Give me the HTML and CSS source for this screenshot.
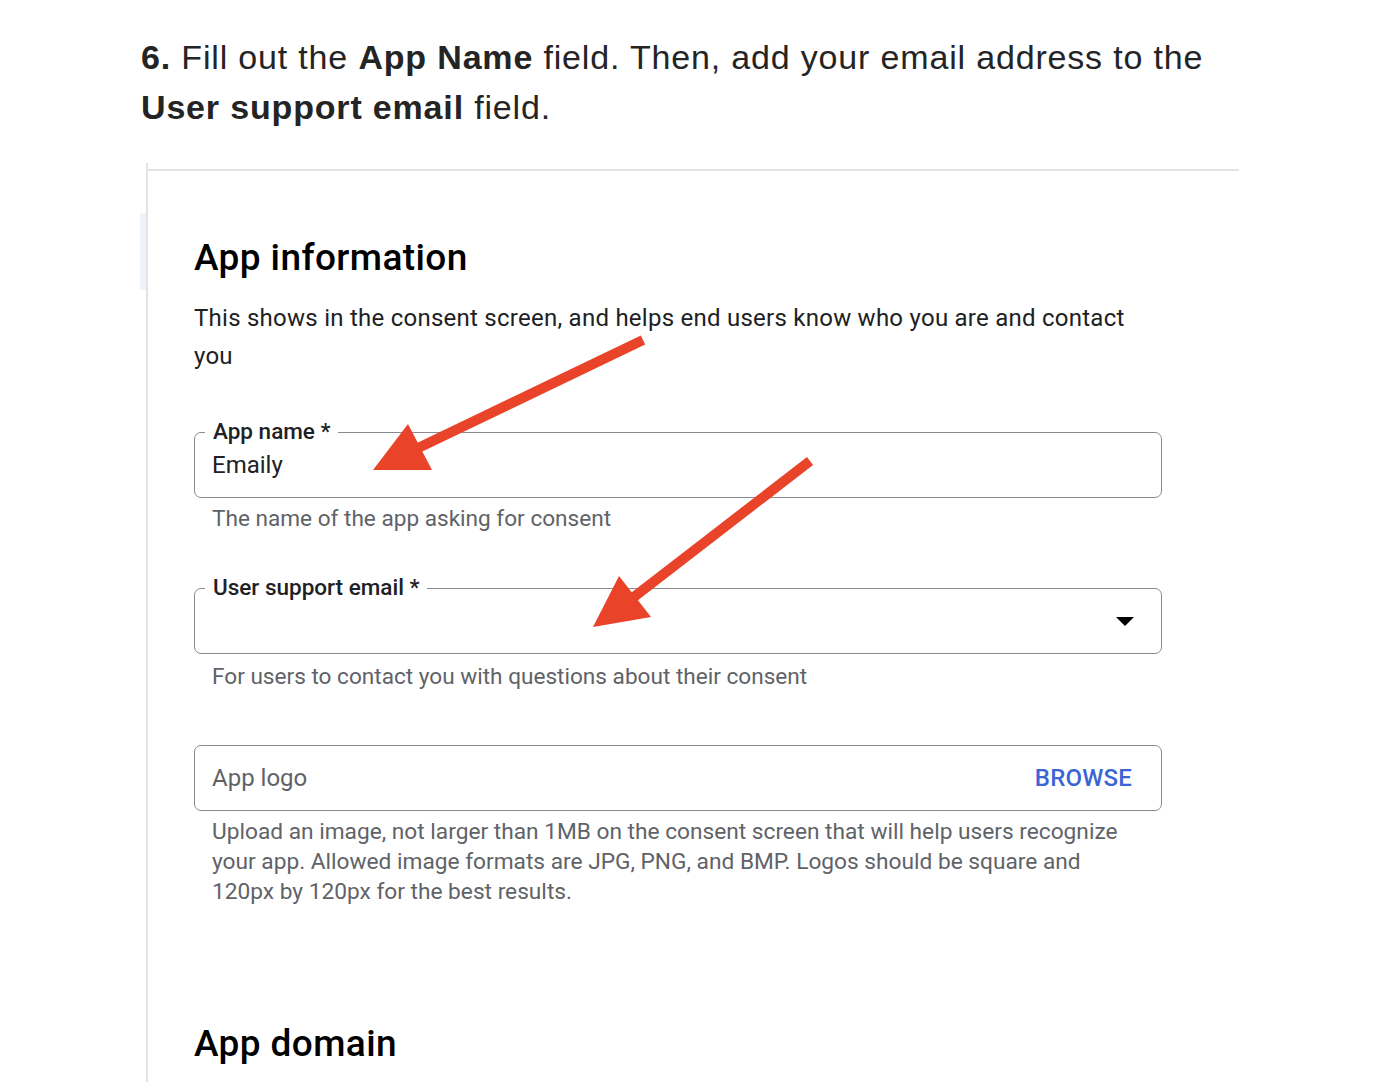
FILE: index.html
```html
<!DOCTYPE html>
<html lang="en">
<head>
<meta charset="utf-8">
<title>App information</title>
<link rel="stylesheet" href="styles.css">
</head>
<body>
<div class="page">
  <p class="step"><strong>6.</strong> Fill out the <strong>App Name</strong> field. Then, add your email address to the <strong>User support email</strong> field.</p>

  <div class="shot">
    <div class="nav-strip"></div>
    <div class="card">
      <div class="card-inner">
        <h2 class="section-title">App information</h2>
        <p class="section-desc">This shows in the consent screen, and helps end users know who you are and contact you</p>

        <div class="field field-first">
          <span class="field-label">App name *</span>
          <span class="field-value">Emaily</span>
        </div>
        <p class="hint">The name of the app asking for consent</p>

        <div class="field field-spaced">
          <span class="field-label">User support email *</span>
          <span class="field-value"></span>
          <span class="caret"></span>
        </div>
        <p class="hint hint-low">For users to contact you with questions about their consent</p>

        <div class="field field-logo">
          <span class="field-placeholder">App logo</span>
          <span class="browse">BROWSE</span>
        </div>
        <p class="hint hint-wide">Upload an image, not larger than 1MB on the consent screen that will help users recognize<br>your app. Allowed image formats are JPG, PNG, and BMP. Logos should be square and<br>120px by 120px for the best results.</p>

        <h2 class="section-title domain-title">App domain</h2>
      </div>
    </div>
  </div>

  <svg class="arrows" width="1396" height="1082" viewBox="0 0 1396 1082" aria-hidden="true">
    <line x1="643" y1="340" x2="414" y2="450" stroke="#e9432a" stroke-width="10"/>
    <polygon points="373,470 408,424 432,470" fill="#e9432a"/>
    <line x1="810" y1="461" x2="630" y2="600" stroke="#e9432a" stroke-width="10"/>
    <polygon points="593,627 619,576 651,617" fill="#e9432a"/>
  </svg>
</div>
</body>
</html>
```

FILE: styles.css
```css
html, body {
  margin: 0;
  padding: 0;
  background: #ffffff;
}

.page {
  position: relative;
  width: 1396px;
  height: 1082px;
  overflow: hidden;
}

.step {
  margin: 32px 0 0 141px;
  width: 1095px;
  font-family: "Liberation Sans", Arial, sans-serif;
  font-size: 34px;
  line-height: 50px;
  color: #242424;
  letter-spacing: 0.83px;
}

.step strong {
  font-weight: 700;
}

.shot {
  display: flex;
  margin: 31px 0 0 140px;
}

.nav-strip {
  width: 6px;
  height: 77px;
  margin-top: 50px;
  background: #eef2fb;
  flex: none;
}

.card {
  flex: none;
  width: 1091px;
  min-height: 930px;
  border-left: 2px solid #e3e3e3;
  padding-top: 6px;
}

.card-inner {
  border-top: 2px solid #e3e3e3;
  padding: 0 0 0 46px;
  font-family: Roboto, "Noto Sans", sans-serif;
  color: #202124;
}

.section-title {
  margin: 65px 0 0 0;
  font-size: 37px;
  line-height: 44px;
  font-weight: 500;
  letter-spacing: 0.4px;
  color: #000000;
}

.section-desc {
  margin: 19px 0 0 0;
  width: 960px;
  font-size: 24px;
  line-height: 38px;
  letter-spacing: 0.25px;
  color: #202124;
}

.field {
  position: relative;
  box-sizing: border-box;
  width: 968px;
  height: 66px;
  border: 1.5px solid #878b90;
  border-radius: 7px;
  display: flex;
  align-items: center;
  padding: 0 27px 0 17px;
}

.field-first {
  margin-top: 57px;
}

.field-spaced {
  margin-top: 54px;
}

.field-logo {
  margin-top: 53px;
}

.field-label {
  position: absolute;
  left: 10px;
  top: -16px;
  padding: 0 8px;
  background: #ffffff;
  font-size: 22.5px;
  line-height: 28px;
  font-weight: 500;
  color: #202124;
}

.field-value {
  flex: 1;
  font-size: 24px;
  line-height: 30px;
  color: #202124;
}

.field-placeholder {
  flex: 1;
  font-size: 24px;
  line-height: 30px;
  color: #5f6368;
}

.caret {
  width: 0;
  height: 0;
  border-left: 9px solid transparent;
  border-right: 9px solid transparent;
  border-top: 9px solid #000000;
}

.browse {
  font-size: 24px;
  font-weight: 500;
  color: #3b65d6;
  letter-spacing: 0.2px;
  margin-right: 2px;
}

.hint {
  margin: 6px 0 0 18px;
  font-size: 22.6px;
  line-height: 30px;
  color: #5f6368;
}

.hint-low {
  margin-top: 8px;
}

.hint-wide {
  font-size: 22.7px;
  white-space: nowrap;
}

.domain-title {
  margin-top: 115px;
}

.arrows {
  position: absolute;
  left: 0;
  top: 0;
  pointer-events: none;
}
```
